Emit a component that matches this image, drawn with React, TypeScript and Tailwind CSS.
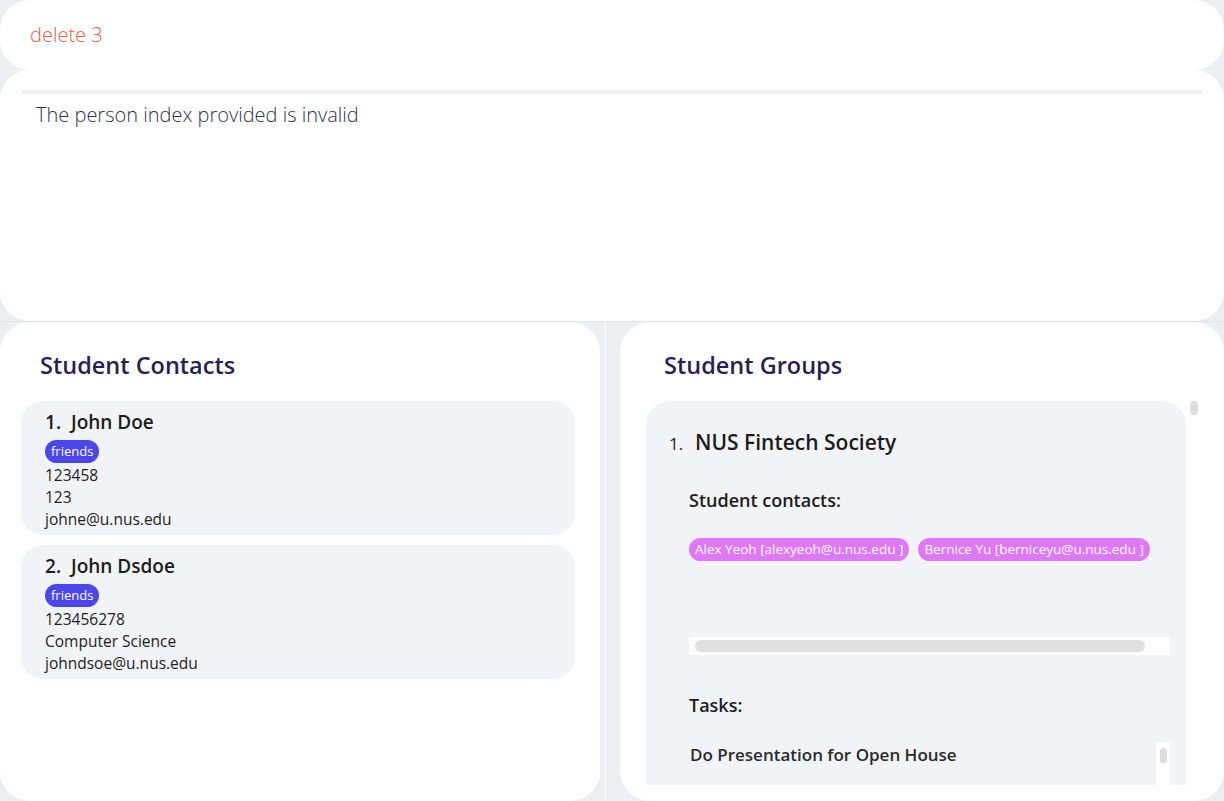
import React from "react";

const font = { fontFamily: '"Open Sans", "Noto Sans", sans-serif' };

const contacts = [
  { idx: 1, name: "John Doe", tag: "friends", lines: ["123458", "123", "johne@u.nus.edu"] },
  { idx: 2, name: "John Dsdoe", tag: "friends", lines: ["123456278", "Computer Science", "johndsoe@u.nus.edu"] },
];

const ContactCard = ({ c }: { c: (typeof contacts)[number] }) => (
  <div className="rounded-[22px] bg-[#f2f3f7] pl-[24px] pt-[9px] pb-[6px] h-[134px]">
    <div className="text-[19px] font-semibold text-[#1c1c1c] leading-[24px]">
      {c.idx}.&nbsp;&nbsp;{c.name}
    </div>
    <div className="mt-[6px] mb-[1px] flex">
      <span className="rounded-full bg-[#4c46f0] px-[6px] h-[23px] leading-[23px] text-[13px] font-medium text-white">
        {c.tag}
      </span>
    </div>
    {c.lines.map((l) => (
      <div key={l} className="text-[15.5px] leading-[22px] text-[#1e1e1e]">
        {l}
      </div>
    ))}
  </div>
);

export default function App() {
  return (
    <div className="w-[1224px] h-[801px] overflow-hidden bg-[#eceff2] flex flex-col" style={font}>
      {/* command box */}
      <div className="h-[70px] shrink-0 bg-white rounded-[30px] flex items-center pl-[30px]">
        <span className="text-[20px] font-light text-[#e2603f]">delete 3</span>
      </div>

      {/* result box */}
      <div className="h-[251px] shrink-0 bg-white rounded-[30px] pt-[20px]">
        <div className="mx-[22px] h-[3px] bg-[#eeeeee] shadow-[0_1px_2px_rgba(0,0,0,0.06)]" />
        <div className="pl-[36px] pt-[7px] text-[20px] font-light text-[#33324a]">
          The person index provided is invalid
        </div>
      </div>

      <div className="h-px shrink-0 bg-[#e2e4e7]" />

      {/* panels */}
      <div className="flex flex-1 min-h-0">
        <div className="w-[600px] bg-white rounded-[30px] pt-[27px] px-[21px] flex flex-col">
          <h2 className="pl-[19px] text-[23.5px] font-semibold text-[#2b1f52] leading-[32px]">Student Contacts</h2>
          <div className="mt-[20px] flex flex-col gap-[10px] w-[554px]">
            {contacts.map((c) => (
              <ContactCard key={c.idx} c={c} />
            ))}
          </div>
        </div>

        <div className="w-[20px] flex">
          <div className="w-[5px]" />
          <div className="w-px bg-white" />
        </div>

        <div className="flex-1 bg-white rounded-[30px] pt-[27px] pl-[26px] flex flex-col min-h-0">
          <h2 className="pl-[18px] text-[23.5px] font-semibold text-[#2b1f52] leading-[32px]">Student Groups</h2>
          <div className="mt-[20px] flex flex-1 min-h-0 pb-[16px]">
            <div className="w-[540px] bg-[#f2f3f7] rounded-t-[24px] overflow-hidden pl-[23px] pt-[26px]">
              <div className="flex items-baseline text-[#1c1c1c]">
                <span className="text-[17px] w-[26px]">1.</span>
                <span className="text-[21px] font-semibold">NUS Fintech Society</span>
              </div>
              <div className="pl-[20px] mt-[29px] text-[18px] font-semibold text-[#1c1c1c] leading-[24px]">
                Student contacts:
              </div>
              <div className="pl-[20px] mt-[26px] flex gap-[9px]">
                <span className="rounded-full bg-[#de78f7] px-[6px] h-[23px] leading-[23px] text-[13.5px] font-medium text-white">
                  Alex Yeoh [alexyeoh@u.nus.edu ]
                </span>
                <span className="rounded-full bg-[#de78f7] px-[6px] h-[23px] leading-[23px] text-[13.5px] font-medium text-white">
                  Bernice Yu [berniceyu@u.nus.edu ]
                </span>
              </div>
              <div className="ml-[20px] mt-[76px] w-[481px] h-[18px] bg-white flex items-center pl-[6px]">
                <div className="w-[450px] h-[12px] rounded-full bg-[#e0e0e0]" />
              </div>
              <div className="pl-[20px] mt-[38px] text-[18px] font-semibold text-[#1c1c1c] leading-[24px]">
                Tasks:
              </div>
              <div className="ml-[21px] mt-[25px] flex w-[480px]">
                <div className="flex-1 text-[17px] font-semibold text-[#2b2b2b]">
                  Do Presentation for Open House
                </div>
                <div className="w-[14px] h-[60px] bg-white flex justify-center pt-[6px]">
                  <div className="w-[7px] h-[15px] rounded-full bg-[#dcdcdc]" />
                </div>
              </div>
            </div>
            <div className="w-[12px] pl-[4px]">
              <div className="w-[8px] h-[14px] rounded-full bg-[#dcdcdc]" />
            </div>
          </div>
        </div>
      </div>
    </div>
  );
}
